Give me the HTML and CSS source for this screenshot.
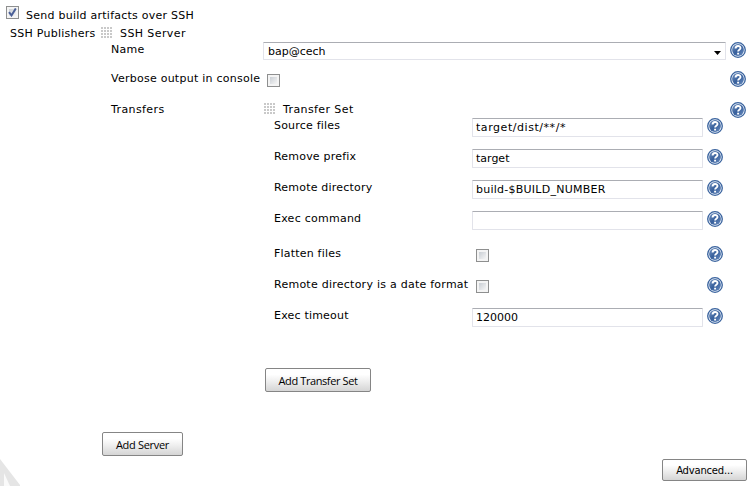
FILE: index.html
```html
<!DOCTYPE html>
<html lang="en">
<head>
<meta charset="utf-8">
<title>Send build artifacts over SSH</title>
<link rel="stylesheet" href="styles.css">
</head>
<body>
<svg class="defs" aria-hidden="true">
  <defs>
    <linearGradient id="blue" x1="0" y1="0" x2="1" y2="1"><stop offset="0" stop-color="#7594c1"/><stop offset=".5" stop-color="#38609c"/><stop offset="1" stop-color="#6a8dc0"/></linearGradient>
    <symbol id="help" viewBox="0 0 16 16"><circle cx="8" cy="8" r="7.3" fill="#edf3fa" stroke="#3a639e" stroke-width="1.3"/><circle cx="8" cy="8" r="5.9" fill="url(#blue)"/><path d="M5.6 6.4C5.6 3.3 10.5 3.3 10.5 6.1C10.5 7.8 8.1 7.8 8.1 9.6M8.1 10.7V12.5" fill="none" stroke="#fff" stroke-width="1.9"/></symbol>
  </defs>
</svg>
<main class="page">
  <label class="step"><span class="check checked"><svg viewBox="0 0 9 9"><path d="M1 4.2L3.5 7.4L7.8 .4" fill="none" stroke="#4a5f97" stroke-width="2"/></svg></span><span>Send build artifacts over SSH</span></label>
  <section class="publishers">
    <div class="section-label">SSH Publishers</div>
    <div class="server">
      <div class="heading"><i class="grip"></i><span class="loose">SSH Server</span></div>
      <div class="row name-row"><span class="label">Name</span><div class="select"><span>bap@cech</span><svg class="arrow" viewBox="0 0 7 4"><path d="M0 0H7L3.5 4Z"/></svg></div><svg class="help"><use href="#help"/></svg></div>
      <div class="row verbose-row"><span class="label">Verbose output in console</span><span class="check"></span><svg class="help"><use href="#help"/></svg></div>
      <div class="row transfers-row">
        <span class="label loose">Transfers</span>
        <div class="transfer">
          <div class="heading set-heading"><i class="grip"></i><span class="loose">Transfer Set</span></div>
          <div class="field"><span class="snug">Source files</span><div class="input wide">target/dist/**/*</div><svg class="help"><use href="#help"/></svg></div>
          <div class="field"><span class="snug">Remove prefix</span><div class="input tight">target</div><svg class="help"><use href="#help"/></svg></div>
          <div class="field"><span class="snug">Remote directory</span><div class="input">build-$BUILD_NUMBER</div><svg class="help"><use href="#help"/></svg></div>
          <div class="field tall"><span>Exec command</span><div class="input"></div><svg class="help"><use href="#help"/></svg></div>
          <div class="field"><span class="snug">Flatten files</span><span class="check"></span><svg class="help"><use href="#help"/></svg></div>
          <div class="field"><span>Remote directory is a date format</span><span class="check"></span><svg class="help"><use href="#help"/></svg></div>
          <div class="field"><span class="snug">Exec timeout</span><div class="input tight">120000</div><svg class="help"><use href="#help"/></svg></div>
          <button class="add-set">Add Transfer Set</button>
        </div>
        <svg class="help"><use href="#help"/></svg>
      </div>
      <button class="add-server">Add Server</button>
    </div>
  </section>
  <button class="advanced">Advanced...</button>
  <svg class="corner" viewBox="0 0 20 27"><path d="M0 0L20 26V27H0Z" fill="#e5e5e5"/><path d="M4 14L10 27H4Z" fill="#fafafa"/></svg>
</main>
</body>
</html>
```
FILE: styles.css
```css
* { box-sizing: border-box; }
body { margin: 0; background: #fff; color: #000; font: 11px/18px Verdana, "DejaVu Sans", sans-serif; letter-spacing: .25px; white-space: nowrap; overflow: hidden; }
.loose { letter-spacing: .4px; }
.wide { letter-spacing: .55px; }
.snug { letter-spacing: .2px; }
.tight, .select { letter-spacing: 0; }
.defs { position: absolute; width: 0; height: 0; }
.page { position: relative; width: 753px; height: 486px; padding-top: 7px; }
.step { display: flex; height: 18px; padding-left: 6px; }
.step .check { margin: -1px 7px 0 0; }
.check { display: block; width: 13px; height: 13px; border: 1px solid #8e8f8f; background: linear-gradient(135deg, #c9ced4, #f5f5f5) 2px 2px / 7px 7px no-repeat #f4f4f4; box-shadow: inset 0 0 0 1px #f4f4f4; }
.check svg { display: block; width: 9px; height: 9px; margin: 1px; }
.publishers { display: grid; grid-template-columns: 92px 651px; padding-left: 10px; height: 434px; }
.heading { display: flex; height: 16px; }
.grip { width: 11px; height: 11px; margin: 2px 8px 0 -1px; background: conic-gradient(from 270deg at 2px 2px, #c9c9c9 90deg, transparent 0) 0 0 / 3px 3px; }
.row { display: grid; grid-template-columns: 152px 1fr 16px; padding: 0 7px 0 9px; }
.name-row { height: 29px; }
.verbose-row { height: 31px; }
.help { display: block; width: 16px; height: 16px; margin-top: 1px; }
.select, .input { border: 1px solid #e2e3ea; border-top-color: #abadb3; border-radius: 1px; background: #fff; }
.select { display: flex; justify-content: space-between; width: 463px; height: 18px; margin-top: 1px; padding: 0 4px; }
.arrow { width: 7px; height: 4px; margin-top: 8px; }
.verbose-row .check { margin: 4px 0 0 4px; }
.transfers-row { height: 331px; }
.set-heading { padding-left: 2px; }
.field { display: grid; grid-template-columns: 198px 231px 16px; height: 31px; padding-left: 11px; }
.field .help { margin-left: 4px; }
.field .input { height: 19px; margin-top: 1px; padding: 0 3px; }
.field .check { margin: 4px 0 0 4px; }
.field.tall { height: 35px; }
button { display: block; height: 24px; padding: 2px 0 0; border: 1px solid #858585; border-radius: 2px; background: linear-gradient(#fff 25%, #ececec 60%, #d5d5d5); color: #000; font: 11px/16px "Open Sans", sans-serif; }
.add-set { width: 106px; margin: 30px 0 0 2px; letter-spacing: -.4px; }
.add-server { width: 81px; letter-spacing: -.3px; }
.advanced { width: 85px; height: 22px; margin-left: 662px; font-family: "DejaVu Sans", sans-serif; font-size: 10px; letter-spacing: -.2px; }
.corner { position: absolute; left: 0; bottom: 0; width: 20px; height: 27px; }
```
